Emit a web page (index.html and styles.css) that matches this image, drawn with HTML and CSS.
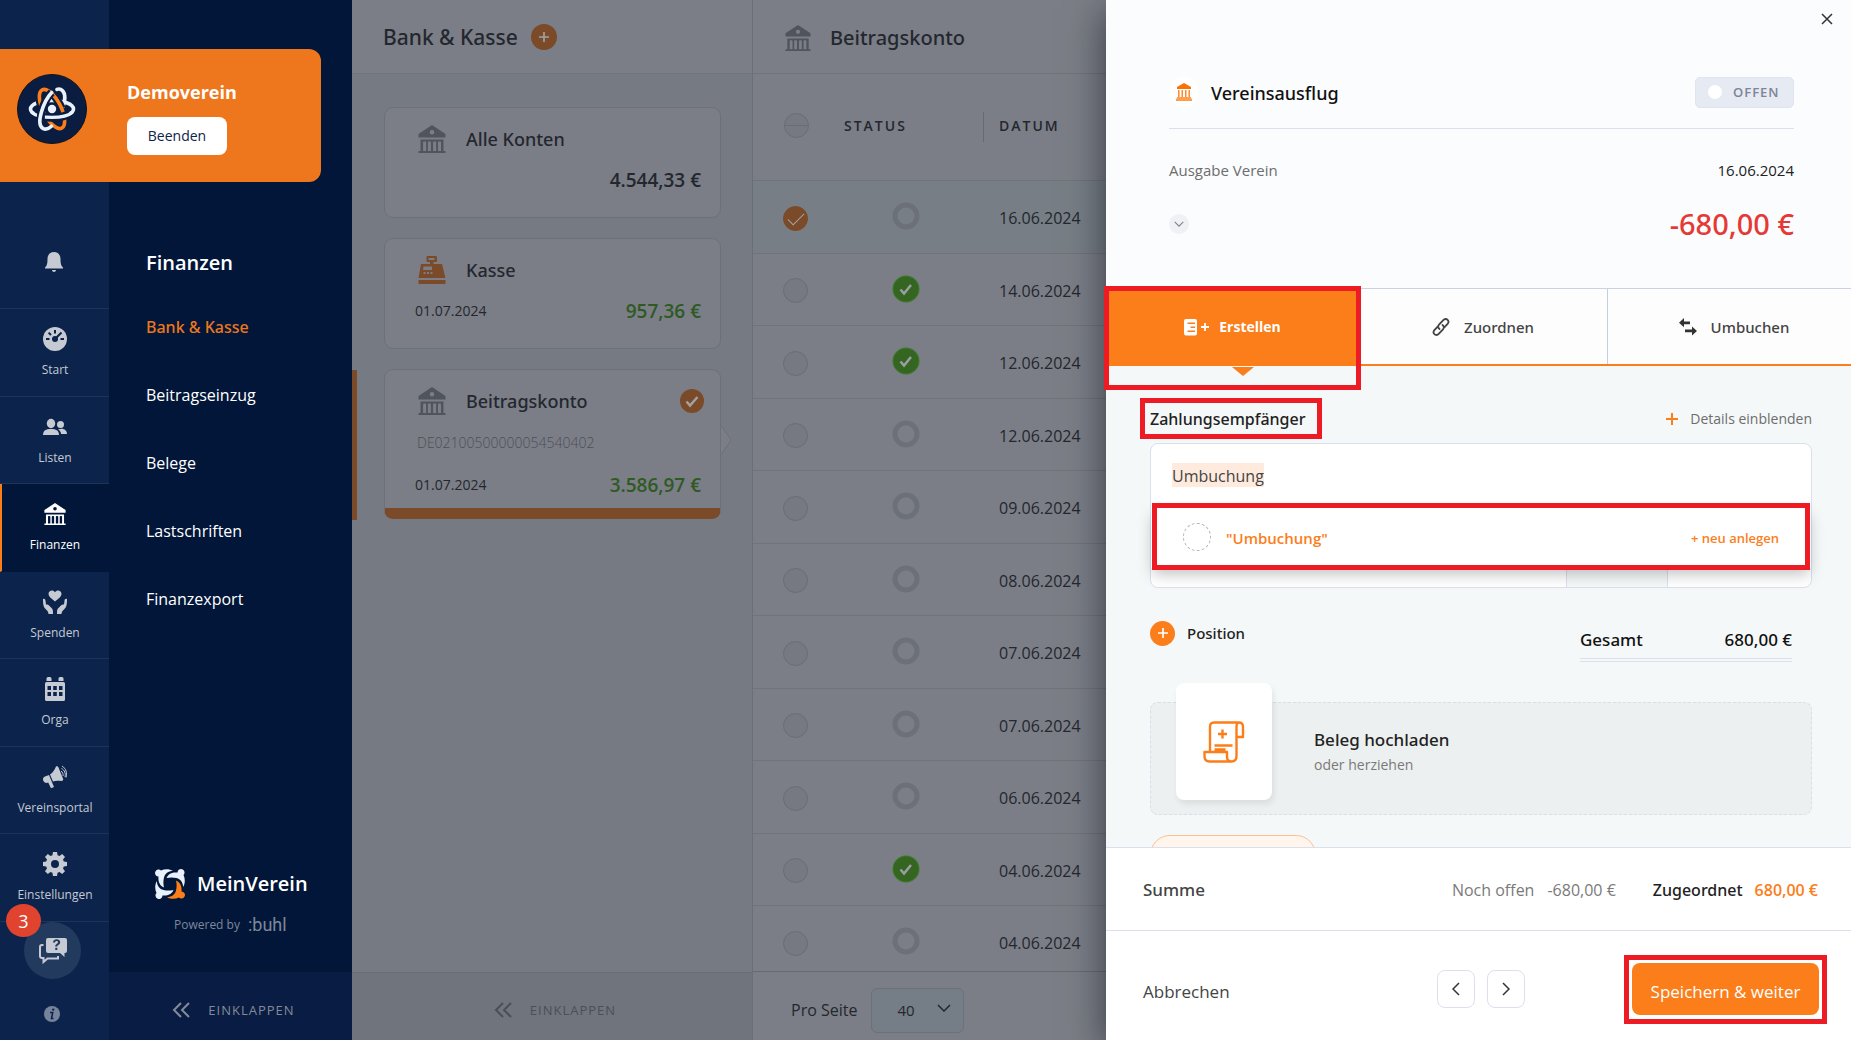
FILE: index.html
```html
<!DOCTYPE html>
<html lang="de">
<head>
<meta charset="utf-8">
<meta name="viewport" content="width=device-width, initial-scale=1">
<title>MeinVerein – Bank &amp; Kasse</title>
<link rel="stylesheet" href="styles.css">
</head>
<body>
<svg class="sprite" aria-hidden="true">
  <symbol id="i-bank" viewBox="0 0 28 28"><path fill-rule="evenodd" d="M14 0 27.500 9v3.500H.5V9zM14 5a2.300 2.300 0 1 0 0 4.600A2.300 2.300 0 0 0 14 5z"/><path fill-rule="evenodd" d="M2.500 14.500h23V26H27.500v2H.5v-2h2zM6 16.500c-.6 0-.9.400-.9 1V26h3v-8.500c0-.6-.4-1-.9-1zm4.800 0c-.6 0-.9.400-.9 1V26h3v-8.500c0-.6-.4-1-.9-1zm5.200 0c-.6 0-.9.400-.9 1V26h3v-8.500c0-.6-.4-1-.9-1zm4.900 0c-.6 0-.9.400-.9 1V26h3v-8.500c0-.6-.4-1-.9-1z"/></symbol>
  <symbol id="i-check" viewBox="0 0 24 24"><path d="m6.500 12.500 3.500 4L17.500 8" fill="none" stroke="currentColor" stroke-width="2.500"/></symbol>
  <symbol id="i-left2" viewBox="0 0 18 16"><path d="M9 1 2 8l7 7M17 1l-7 7 7 7" fill="none" stroke="currentColor" stroke-width="2"/></symbol>
  <symbol id="i-plus" viewBox="0 0 12 12"><path d="M6 0v12M0 6h12" fill="none" stroke="currentColor" stroke-width="2"/></symbol>
  <symbol id="i-down" viewBox="0 0 14 8"><path d="m1 1 6 6 6-6" fill="none" stroke="currentColor" stroke-width="1.500"/></symbol>
  <symbol id="i-ring" viewBox="0 0 28 28"><circle cx="14" cy="14" r="11" fill="none" stroke="#6c7079" stroke-width="5"/></symbol>
  <symbol id="i-done" viewBox="0 0 28 28"><circle cx="14" cy="14" r="13.500" fill="#3e7a2a"/><circle cx="14" cy="14" r="12.500" fill="#356621"/><path d="m8.500 14.500 3.500 4 7-8.500" fill="none" stroke="#9a9da1" stroke-width="2.500"/></symbol>
</svg>

<div class="app">
  <nav class="rail" aria-label="Hauptmenü">
    <a class="bell" href="#" aria-label="Benachrichtigungen"><svg width="18" height="20" viewBox="0 0 18 20"><path d="M9 0c4 0 6.500 3 6.500 7 0 4 .3 6.500 2.500 8.500v1H0v-1C2.200 13.500 2.500 11 2.500 7 2.500 3 5 0 9 0zM7 18h4c0 2.500-4 2.500-4 0z"/></svg></a>
    <ul>
      <li><a href="#"><svg width="24" height="24" viewBox="0 0 24 24"><circle cx="12" cy="12" r="12"/><g stroke="#0c244b" stroke-width="2" fill="none"><path d="M12 3v3.500M3 12h3.500M17.500 12H21M5.600 5.600 8 8M12 12l6.500-6.500"/></g><circle cx="12" cy="12" r="3" fill="#0c244b"/></svg>Start</a></li>
      <li><a href="#"><svg width="24" height="24" viewBox="0 0 24 24"><circle cx="17.500" cy="9.500" r="3.500"/><path d="M15 14.500c5-2 9 .5 9 4.500h-6c0-2-1-3.500-3-4.500z"/><ellipse cx="8" cy="8.500" rx="4.200" ry="4.700"/><path d="M0 20c0-4.500 3-6 8-6s8 1.500 8 6z"/></svg>Listen</a></li>
      <li class="on"><a href="#" aria-current="page"><svg width="22" height="24"><use href="#i-bank"/></svg>Finanzen</a></li>
      <li><a href="#"><svg width="24" height="24" viewBox="0 0 24 24"><path d="M12 11.500C8 8.500 5.500 6.500 5.500 3.800 5.500.5 10-.8 12 2.200c2-3 6.500-1.700 6.500 1.600 0 2.700-2.500 4.700-6.500 7.700z"/><path d="M0 9c1.500-.5 2.500.5 2.500 2l.5 3.500c1 0 1.500-.5 2.800.8L9 18.500c.8 1 1 2 1 5.500H5.500c0-2-1-3-2.500-4.500C.5 17 0 15 0 9zM24 9c-1.500-.5-2.500.5-2.500 2l-.5 3.500c-1 0-1.500-.5-2.800.8L15 18.500c-.8 1-1 2-1 5.500h4.500c0-2 1-3 2.500-4.500C23.500 17 24 15 24 9z"/></svg>Spenden</a></li>
      <li><a href="#"><svg width="24" height="24" viewBox="0 0 24 24"><path fill-rule="evenodd" d="M5 0h2a1.500 1.500 0 0 1 1.500 1.500V4h-5V1.500A1.500 1.500 0 0 1 5 0zm12 0h2a1.500 1.500 0 0 1 1.500 1.500V4h-5V1.500A1.500 1.500 0 0 1 17 0zM3.500 5h17A1.500 1.500 0 0 1 22 6.500v16a1.500 1.500 0 0 1-1.500 1.500h-17A1.500 1.500 0 0 1 2 22.500v-16A1.500 1.500 0 0 1 3.500 5zM4.500 9v4H8V9zm5.700 0v4h3.600V9zm5.800 0v4h3.500V9zM4.500 15v4H8v-4zm5.700 0v4h3.600v-4zm5.800 0v4h3.500v-4z"/></svg>Orga</a></li>
      <li><a href="#"><svg width="24" height="24" viewBox="0 0 24 24"><path d="M13 1.500c1.500-.8 2 0 2.500 1l4.500 11c.5 1.500 0 2.500-1.500 2.500-3.500-.5-6-.5-8.500.5L7 9.500c3-2 4.500-4.500 6-8zM6 10l2.800 6.800L11 22l-3 1.200-2.800-5.700C3 18.500 1 17.500.3 15.800-.5 13.500.5 12 2 11.500z"/><g fill="none" stroke="#c5cad3"><path d="M18 6c1.500 1 2.500 3 2 5M18.500 3.500c3 1.500 4.500 5 3.500 8.500M19 1c4 2.500 5.500 7 4 11.500"/></g></svg>Vereinsportal</a></li>
      <li><a href="#"><svg width="24" height="24" viewBox="0 0 24 24"><path fill-rule="evenodd" d="M10 0h4l.6 3.200 1.900.8L19.200 2.100 22 4.900 20 7.500l.8 1.900L24 10v4l-3.200.6-.8 1.900 2 2.700-2.800 2.800-2.700-2-1.900.8L14 24h-4l-.6-3.200-1.900-.8-2.700 2L2 19.200l2-2.700-.8-1.900L0 14v-4l3.200-.6.8-1.900-2-2.600 2.800-2.800L7.500 4l1.900-.8zM12 8a4 4 0 1 0 0 8 4 4 0 0 0 0-8z"/></svg>Einstellungen</a></li>
    </ul>
    <div class="rail-end">
      <button class="help" type="button" aria-label="Hilfe"><svg width="28" height="26" viewBox="0 0 28 26"><path fill-rule="evenodd" d="M9 0h17a2 2 0 0 1 2 2v11a2 2 0 0 1-2 2h-.5v4L21 15H9a2 2 0 0 1-2-2V2a2 2 0 0 1 2-2zm5 4.500h2c0-2 3-2 3-.2 0 1.500-2.800 1.700-2.800 4.200h2c0-1.500 3-1.800 3-4.300 0-4-7-4-7.200.3zm2.300 5.300v2.200h2V9.800z"/><path d="M4.500 7H3a2 2 0 0 0-2 2v9a2 2 0 0 0 2 2h1.500v4l4-3.500H19V18" fill="none" stroke="#c5cad3" stroke-width="2"/></svg><span class="count">3</span></button>
      <a class="info" href="#" aria-label="Info"><svg width="16" height="16" viewBox="0 0 16 16"><circle cx="8" cy="8" r="8" fill="#76839b"/><circle cx="9.200" cy="3.600" r="1.200" fill="#0c244b"/><path d="M6 6.500h2.700L7.500 12.500h2" fill="none" stroke="#0c244b" stroke-width="1.600"/></svg></a>
    </div>
  </nav>

  <nav class="subnav" aria-label="Finanzen">
    <h2>Finanzen</h2>
    <ul>
      <li><a class="on" href="#">Bank &amp; Kasse</a></li>
      <li><a href="#">Beitragseinzug</a></li>
      <li><a href="#">Belege</a></li>
      <li><a href="#">Lastschriften</a></li>
      <li><a href="#">Finanzexport</a></li>
    </ul>
    <div class="brand">
      <div class="brand-name"><svg width="30" height="30" viewBox="0 0 30 30"><defs><path id="fig" d="M21 11.500c4.500 2 6 6 5.500 11a3.500 3.500 0 1 1-2.500 6c-4 1.900-8.500 1.600-12-.3 5-.4 8-2.700 9-6.700.8-3.500.8-6.500 0-10z"/></defs><g fill="#e8f1fc"><use href="#fig" transform="rotate(90 15 15)"/><use href="#fig" transform="rotate(180 15 15)"/><use href="#fig" transform="rotate(-90 15 15)"/></g><use href="#fig" fill="#fb7e1a"/></svg>MeinVerein</div>
      <div class="powered">Powered by <span>:buhl</span></div>
    </div>
    <button class="collapse" type="button"><svg width="18" height="16"><use href="#i-left2"/></svg>Einklappen</button>
  </nav>

  <section class="club" aria-label="Verein">
    <svg width="70" height="70" viewBox="0 0 70 70"><circle cx="35" cy="35" r="34.500" fill="#0a1c40" stroke="#10131c"/><g fill="none" stroke-width="3.600" stroke-linecap="round"><g transform="rotate(24 35 35)"><path d="M44 28c-.5-9-4.500-14.500-9-14.500-1.500 0-2.500.5-3.500 1.500" stroke="#e8f1fc"/></g><ellipse cx="35" cy="35" rx="21.500" ry="8.500" stroke="#e8f1fc"/><g transform="rotate(-27 35 35)"><path d="M26 36c0-13 4-22.500 9-22.500s9 9.500 9 21.500v4" stroke="#0a1c40" stroke-width="8" stroke-linecap="butt"/><ellipse cx="35" cy="35" rx="9" ry="21.500" stroke="#fb7e1a"/></g><path d="M17 39.500c9 5.500 27 5.500 36 0" stroke="#0a1c40" stroke-width="8" stroke-linecap="butt"/><path d="M15 38.500c7 6.500 33 6.500 40 0" stroke="#e8f1fc" stroke-width="3.400"/><g transform="rotate(24 35 35)"><path d="M28 20c-3.500 9-2.500 22 1 29" stroke="#0a1c40" stroke-width="8" stroke-linecap="butt"/><path d="M28 20c-4 11-2 36.500 7 36.500 3 0 5-2 6.500-5.500" stroke="#e8f1fc"/></g></g><circle cx="35" cy="35" r="4.200" fill="#e8f1fc"/></svg>
    <div><strong>Demoverein</strong><button type="button">Beenden</button></div>
  </section>

  <section class="accounts">
    <header><h1>Bank &amp; Kasse</h1><button class="add" type="button" aria-label="Konto hinzufügen"><svg width="10" height="10"><use href="#i-plus"/></svg></button></header>
    <div class="cards">
      <article class="card">
        <div class="card-head"><svg class="gray" width="28" height="28"><use href="#i-bank"/></svg><h3>Alle Konten</h3></div>
        <div class="card-foot"><span></span><b class="dark">4.544,33 €</b></div>
      </article>
      <article class="card">
        <div class="card-head"><svg class="orange" width="28" height="28" viewBox="0 0 28 28"><path fill-rule="evenodd" d="M9 0h9a1 1 0 0 1 1 1v4a1 1 0 0 1-1 1h-2.500v2H24l3.500 14H.5L3 8h9V6H9.500a1 1 0 0 1-1-1V1zm1.500 2v2h6V2zM5.500 10.500 5 14h9v-3.500zM5.500 16v2h2v-2zm3.500 0v2h2v-2zm3.500 0v2h2v-2z"/><path d="M.5 24h27v3a1.500 1.500 0 0 1-1.500 1.500H2A1.500 1.500 0 0 1 .5 27z"/></svg><h3>Kasse</h3></div>
        <div class="card-foot"><time>01.07.2024</time><b>957,36 €</b></div>
      </article>
      <article class="card on">
        <div class="card-head"><svg class="gray" width="28" height="28"><use href="#i-bank"/></svg><h3>Beitragskonto</h3><span class="tick"><svg width="24" height="24"><use href="#i-check"/></svg></span></div>
        <div class="iban">DE02100500000054540402</div>
        <div class="card-foot"><time>01.07.2024</time><b>3.586,97 €</b></div>
        <svg class="pointer" width="12" height="32" viewBox="0 0 12 32"><path d="M1 1l10 15L1 31" fill="#7b7e86" stroke="#6c7079"/></svg>
      </article>
    </div>
    <button class="collapse" type="button"><svg width="18" height="16"><use href="#i-left2"/></svg>Einklappen</button>
  </section>

  <main class="bookings">
    <header><svg class="gray" width="26" height="28"><use href="#i-bank"/></svg><h2>Beitragskonto</h2></header>
    <div class="scroll">
      <table>
        <thead><tr><th class="c-sel"><input class="all" type="checkbox" aria-label="Alle auswählen"></th><th class="c-stat">Status</th><th class="c-date">Datum</th></tr></thead>
        <tbody>
          <tr class="on"><td><input type="checkbox" checked aria-label="Buchung 16.06.2024"></td><td class="stat"><svg width="28" height="28"><use href="#i-ring"/></svg></td><td>16.06.2024</td></tr>
          <tr><td><input type="checkbox" aria-label="Buchung 14.06.2024"></td><td class="stat"><svg width="28" height="28"><use href="#i-done"/></svg></td><td>14.06.2024</td></tr>
          <tr><td><input type="checkbox" aria-label="Buchung 12.06.2024"></td><td class="stat"><svg width="28" height="28"><use href="#i-done"/></svg></td><td>12.06.2024</td></tr>
          <tr><td><input type="checkbox" aria-label="Buchung 12.06.2024"></td><td class="stat"><svg width="28" height="28"><use href="#i-ring"/></svg></td><td>12.06.2024</td></tr>
          <tr><td><input type="checkbox" aria-label="Buchung 09.06.2024"></td><td class="stat"><svg width="28" height="28"><use href="#i-ring"/></svg></td><td>09.06.2024</td></tr>
          <tr><td><input type="checkbox" aria-label="Buchung 08.06.2024"></td><td class="stat"><svg width="28" height="28"><use href="#i-ring"/></svg></td><td>08.06.2024</td></tr>
          <tr><td><input type="checkbox" aria-label="Buchung 07.06.2024"></td><td class="stat"><svg width="28" height="28"><use href="#i-ring"/></svg></td><td>07.06.2024</td></tr>
          <tr><td><input type="checkbox" aria-label="Buchung 07.06.2024"></td><td class="stat"><svg width="28" height="28"><use href="#i-ring"/></svg></td><td>07.06.2024</td></tr>
          <tr><td><input type="checkbox" aria-label="Buchung 06.06.2024"></td><td class="stat"><svg width="28" height="28"><use href="#i-ring"/></svg></td><td>06.06.2024</td></tr>
          <tr><td><input type="checkbox" aria-label="Buchung 04.06.2024"></td><td class="stat"><svg width="28" height="28"><use href="#i-done"/></svg></td><td>04.06.2024</td></tr>
          <tr><td><input type="checkbox" aria-label="Buchung 04.06.2024"></td><td class="stat"><svg width="28" height="28"><use href="#i-ring"/></svg></td><td>04.06.2024</td></tr>
        </tbody>
      </table>
    </div>
    <footer><label for="per-page">Pro Seite</label><span class="select"><select id="per-page"><option>40</option></select><svg width="14" height="8"><use href="#i-down"/></svg></span></footer>
  </main>

  <aside class="panel" aria-label="Buchung zuordnen">
    <button class="close" type="button" aria-label="Schließen"><svg width="12" height="12" viewBox="0 0 12 12"><path d="m1 1 10 10M11 1 1 11" stroke="#333" stroke-width="1.500"/></svg></button>
    <header class="detail">
      <div class="title">
        <span class="title-icon"><svg width="18" height="18" viewBox="0 0 18 18"><path d="M9 0l7 4v2H2V4z" fill="#fb7200"/><path d="M3 7h1.500v7H3zm3.500 0H8v7H6.500zM10 7h1.500v7H10zm3.500 0H15v7h-1.500z" fill="#fb8a30"/><path d="M2 14h14v1.500h1V18H1v-2.500h1z" fill="#fca050"/></svg></span>
        <h2>Vereinsausflug</h2><span class="badge">Offen</span>
      </div>
      <div class="line"><span>Ausgabe Verein</span><time>16.06.2024</time></div>
      <div class="line amount"><button type="button" aria-label="Mehr anzeigen"><svg width="10" height="6"><use href="#i-down"/></svg></button><b>-680,00 €</b></div>
    </header>
    <div class="tabs" role="tablist">
      <button class="on" type="button" role="tab" aria-selected="true"><svg width="26" height="18" viewBox="0 0 26 18"><path fill-rule="evenodd" d="M2 1h9a2 2 0 0 1 2 2v12.500a2 2 0 0 1-2 2H2a2 2 0 0 1-2-2V3a2 2 0 0 1 2-2zm1.500 3.500V6H11V4.500zm3 4V10H11V8.500zm-3 4V14H11v-1.500z"/><path d="M17 9h8M21 5v8" stroke="#fff" stroke-width="1.800"/></svg>Erstellen</button>
      <button type="button" role="tab"><svg width="18" height="18" viewBox="0 0 18 18"><g fill="none" stroke="#444" stroke-width="1.800" stroke-linecap="round"><path d="M7.500 11C5.800 9.700 5.800 8 7 6.700l4.300-4.600c1.300-1.400 3.200-1.400 4.300-.3s1.100 2.800 0 4.100l-3 3.300"/><path d="M10.500 7c1.700 1.300 1.700 3 .5 4.300l-4.300 4.600c-1.300 1.400-3.200 1.400-4.300.3s-1.100-2.800 0-4.100l3-3.300"/></g></svg>Zuordnen</button>
      <button type="button" role="tab"><svg width="18" height="18" viewBox="0 0 18 18"><path d="M5 0v3.500h6v2.800H5v3L0 4.700zM13 8.500 18 13l-5 4.500v-3.200H6v-2.800h7z" fill="#333"/></svg>Umbuchen</button>
      <span class="mark mark-tab"></span>
    </div>
    <div class="form">
      <div class="form-head"><label for="payee">Zahlungsempfänger<span class="mark mark-label"></span></label><button class="more" type="button"><svg width="12" height="12"><use href="#i-plus"/></svg>Details einblenden</button></div>
      <div class="entry">
        <div class="payee"><input id="payee" type="text" value="Umbuchung"></div>
        <div class="cells"><span></span><span></span><span></span></div>
        <button class="suggest" type="button"><span class="dash"></span><b>"Umbuchung"</b><em>+ neu anlegen</em><span class="mark mark-suggest"></span></button>
      </div>
      <div class="totals">
        <button class="position" type="button"><span><svg width="10" height="10"><use href="#i-plus"/></svg></span>Position</button>
        <div class="sum"><span>Gesamt</span><span>680,00 €</span></div>
      </div>
      <div class="upload">
        <div class="receipt"><svg width="42" height="42" viewBox="0 0 42 42"><g fill="none" stroke="#fb7e1a" stroke-width="2.400" stroke-linejoin="round"><path d="M7 31V6c0-3 1-4.500 4-4.500h25M36 1.500c3 0 4 2 4 4.500v10h-6.500V6c0-2.500.5-4.500 2.500-4.500zM33.500 16v19c0 3.500-2 5.500-5 5.500s-4.500-2-4.500-4.500v-5H1.500v4c0 3.500 1.500 5.500 5 5.500h22M15 13h9M19.500 8.500v9M11.500 24.500h18M11.500 28.500h11"/></g></svg></div>
        <div class="upload-text"><strong>Beleg hochladen</strong><p>oder herziehen</p></div>
      </div>
      <button class="pill" type="button" aria-label="Weitere Angaben"></button>
    </div>
    <div class="balance"><strong>Summe</strong><span class="open">Noch offen</span><span class="open">-680,00 €</span><span class="assigned">Zugeordnet</span><b>680,00 €</b></div>
    <footer>
      <button class="cancel" type="button">Abbrechen</button>
      <button class="step" type="button" aria-label="Zurück"><svg width="8" height="14" viewBox="0 0 8 14"><path d="M7 1 1 7l6 6" fill="none" stroke="#333" stroke-width="1.500"/></svg></button>
      <button class="step" type="button" aria-label="Vor"><svg width="8" height="14" viewBox="0 0 8 14"><path d="m1 1 6 6-6 6" fill="none" stroke="#333" stroke-width="1.500"/></svg></button>
      <button class="save" type="button">Speichern &amp; weiter<span class="mark mark-save"></span></button>
    </footer>
  </aside>
</div>
</body>
</html>
```
FILE: styles.css
```css
* { box-sizing: border-box; }
body { margin: 0; font: 15px/20px "Open Sans", "Noto Sans", sans-serif; color: #222; background: #7b7e86; }
button, input, select { font: inherit; color: inherit; border: 0; background: none; padding: 0; }
h1, h2, h3, p, ul { margin: 0; padding: 0; font-weight: 400; }
ul { list-style: none; }
a { color: inherit; text-decoration: none; }
svg { display: block; flex: none; fill: currentColor; }
.sprite { position: absolute; width: 0; height: 0; }

/* medium weight for headings and emphasised values */
h1, h3, .bookings h2, .title h2, .amount b, .form-head label, .position, .sum, .upload strong,
.balance strong, .assigned, .tabs button, .subnav .on { font-family: "Noto Sans", "Open Sans", sans-serif; font-weight: 500; }

.app { position: relative; display: grid; grid-template-columns: 109px 243px 401px 1fr; height: 100vh; overflow: hidden; }
.app > * { min-height: 0; }
.gray { color: #50545d; }
.orange { color: #7a4a29; }

/* icon rail */
.rail { display: flex; flex-direction: column; background: #0c244b; color: #c5cad3; }
.bell { flex: none; height: 309px; padding: 252px 0 0 45px; border-bottom: 1px solid #1f3558; }
.rail ul { flex: 1; display: flex; flex-direction: column; }
.rail li { flex: 1; display: flex; border-bottom: 1px solid #1f3558; }
.rail li a { flex: 1; display: flex; flex-direction: column; align-items: center; gap: 9px; padding: 18px 0 0 1px; font-size: 12px; line-height: 20px; }
.rail li.on { background: #011638; color: #fff; border-left: 2px solid #fb7e1a; border-bottom-color: #011638; }
.rail li.on a { padding: 18px 1px 0 0; }
.rail-end { flex: none; height: 118px; padding-left: 24px; }
.help { position: relative; display: flex; align-items: center; justify-content: center; width: 57px; height: 57px; border-radius: 50%; background: #233a5f; }
.count { position: absolute; left: -18px; top: -18px; width: 35px; height: 33px; border-radius: 50%; background: #e0432e; color: #fff; font-size: 18px; line-height: 34px; }
.info { display: block; margin: 27px 0 0 20px; }

/* sub navigation */
.subnav { display: flex; flex-direction: column; background: #011638; color: #fff; }
.subnav h2 { margin: 249px 0 0 37px; font-size: 20px; line-height: 28px; font-weight: 600; }
.subnav ul { flex: 1; padding: 16px 0 0 37px; font-size: 16px; }
.subnav li { height: 68px; line-height: 68px; }
.subnav .on { color: #ee761c; }
.brand { height: 104px; padding-left: 46px; }
.brand-name { display: flex; align-items: center; gap: 12px; font: 600 20px/32px "Open Sans", sans-serif; color: #fff; }
.powered { display: flex; align-items: center; gap: 8px; padding: 15px 0 0 19px; font-size: 12px; color: #7d889b; }
.powered span { font: 18px/20px Roboto, sans-serif; }
.collapse { flex: none; display: flex; align-items: center; justify-content: center; gap: 18px; height: 68px; padding: 7px 0 0 6px; text-transform: uppercase; font-size: 13px; letter-spacing: 1px; }
.subnav .collapse { background: #091c43; color: #848b98; }

/* club card over both navigations */
.club { position: absolute; left: 0; top: 49px; width: 321px; height: 133px; display: flex; gap: 40px; padding: 25px 0 0 17px; background: #ee761c; border-radius: 0 12px 12px 0; color: #fff; }
.club div { display: flex; flex-direction: column; align-items: flex-start; gap: 11px; padding-top: 4px; }
.club strong { font-size: 18px; line-height: 28px; font-weight: 700; }
.club button { width: 100px; height: 38px; border-radius: 8px; background: #fff; color: #0c244b; font-size: 14px; }

/* account list */
.accounts { display: flex; flex-direction: column; background: #767a83; color: #23272f; border-right: 1px solid #6a6e77; }
.accounts header { display: flex; align-items: center; gap: 13px; height: 74px; padding-left: 31px; background: #7b7e86; border-bottom: 1px solid #70747d; }
.accounts h1 { font-size: 21px; line-height: 30px; }
.add { display: flex; align-items: center; justify-content: center; width: 26px; height: 26px; border-radius: 50%; background: #7a4a29; color: #a0a2a6; }
.cards { flex: 1; display: flex; flex-direction: column; gap: 20px; padding: 33px 31px 0 32px; }
.card { position: relative; height: 111px; padding: 15px 19px 0 30px; background: #7b7e86; border: 1px solid #6c7079; border-radius: 9px; }
.card-head { display: flex; align-items: center; gap: 20px; height: 32px; padding-left: 3px; }
.card h3 { flex: 1; font-size: 18px; line-height: 24px; }
.card-foot { display: flex; align-items: center; justify-content: space-between; height: 50px; font-size: 14px; }
.card-foot b { font-size: 19px; font-weight: 600; color: #2f5a24; }
.card-foot .dark { color: #23272f; }
.card.on { height: 150px; border-bottom: 11px solid #7a4a29; }
.card.on::before { content: ""; position: absolute; left: -33px; top: 0; width: 5px; height: 150px; background: #7a4a29; }
.tick { margin-right: -3px; width: 24px; height: 24px; border-radius: 50%; background: #7a4a29; color: #a0a2a6; }
.iban { padding: 16px 0 7px 2px; font-size: 14px; line-height: 20px; font-weight: 300; color: #4b4f58; }
.pointer { position: absolute; right: -12px; top: 54px; }
.accounts .collapse { background: #70747d; color: #4b4f58; border-top: 1px solid #6a6e77; }

/* booking list */
.bookings { display: flex; flex-direction: column; background: #7b7e86; color: #23272f; }
.bookings header { flex: none; display: flex; align-items: center; gap: 19px; height: 74px; padding: 2px 0 0 32px; border-bottom: 1px solid #6f737c; }
.bookings h2 { font-size: 20px; line-height: 30px; }
.scroll { flex: 1; min-height: 0; overflow: hidden; }
table { width: 100%; border-collapse: separate; border-spacing: 0; table-layout: fixed; }
th, td { padding: 0; text-align: left; border-bottom: 1px solid #6f737c; }
thead th { height: 107px; padding-bottom: 3px; font-size: 14px; font-weight: 600; text-transform: uppercase; letter-spacing: 2px; }
.c-sel { width: 91px; }
.c-stat { width: 155px; background: linear-gradient(#666a73, #666a73) right 15px center / 1px 30px no-repeat; }
tbody td { height: 73px; padding-top: 2px; font-size: 16px; }
tbody tr:nth-child(even) td { height: 72px; }
tbody .on td { background: #777e85; }
.stat svg { margin: -4px 0 0 48px; }
td input, th input { appearance: none; display: block; width: 25px; height: 25px; margin: 0 0 0 30px; border: 1px solid #696d76; border-radius: 50%; background: #767981; }
.all { margin: 0 0 0 31px; background: linear-gradient(#696d76, #696d76) center / 100% 1px no-repeat #767981; }
td input:checked { border-color: #7a4a29; background: #7a4a29; }
td input:checked::after { content: ""; display: block; width: 15px; height: 7px; margin: 6px 0 0 4px; border: solid #a0a2a6; border-width: 0 0 1px 1px; transform: rotate(-45deg); }
.bookings footer { flex: none; display: flex; align-items: center; gap: 14px; height: 69px; padding: 8px 0 0 38px; font-size: 16px; border-top: 1px solid #666a73; }
.select { display: grid; align-items: center; width: 93px; height: 45px; }
.select select { grid-area: 1/1; width: 100%; height: 100%; padding-left: 25px; appearance: none; font-size: 15px; background: #757d86; border: 1px solid #6d717a; border-radius: 6px; }
.select svg { grid-area: 1/1; justify-self: end; margin: 0 13px 4px 0; }

/* slide-over panel */
.panel { position: absolute; right: 0; top: 0; bottom: 0; width: 745px; display: flex; flex-direction: column; background: #fff; box-shadow: 0 10px 36px rgba(10, 14, 24, .6); clip-path: inset(0 0 0 -60px); }
.mark { position: absolute; border: 5px solid #ed1c24; pointer-events: none; }
.close { position: absolute; right: 18px; top: 13px; }
.detail { flex: none; height: 288px; padding: 77px 57px 0 63px; background: #fbfcfe; }
.title { display: flex; align-items: center; height: 52px; padding-bottom: 21px; border-bottom: 1px solid #dcdfee; }
.title-icon { display: flex; align-items: center; justify-content: center; width: 30px; height: 30px; border-radius: 50%; background: #fff; }
.title h2 { flex: 1; padding: 2px 0 0 12px; font-size: 18px; line-height: 28px; color: #111; }
.badge { display: flex; align-items: center; gap: 11px; width: 99px; height: 31px; padding-left: 12px; border: 1px solid #dfe4f0; border-radius: 5px; background: #e6eaf3; color: #7c8497; font-size: 13px; font-weight: 600; letter-spacing: 1px; text-transform: uppercase; }
.badge::before { content: ""; width: 14px; height: 14px; border-radius: 50%; background: #fff; }
.line { display: flex; align-items: center; justify-content: space-between; padding-top: 31px; font-size: 15px; color: #6d6d6d; }
.line time { color: #222; }
.amount { padding-top: 26px; }
.amount button { display: flex; align-items: center; justify-content: center; width: 20px; height: 20px; border-radius: 50%; background: #f0f0f5; color: #7c8090; }
.amount b { font-size: 29px; line-height: 36px; color: #e53935; }
.tabs { flex: none; position: relative; display: grid; grid-template-columns: repeat(3, 1fr); width: calc(100% + 8px); height: 78px; border-top: 1px solid #ccd3e0; border-bottom: 2px solid #fb7e1a; background: #fdfdfd; }
.tabs button { display: flex; align-items: center; justify-content: center; gap: 14px; padding: 1px 0 0 2px; font-size: 15px; color: #444; }
.tabs button + button { border-right: 1px solid #c5cfdd; }
.tabs .on { position: relative; gap: 9px; background: #fb7e1a; color: #fff; font-family: "Open Sans", sans-serif; font-size: 14px; font-weight: 700; }
.tabs .on::after { content: ""; position: absolute; left: 50%; top: 78px; border: solid transparent; border-width: 9px 11px 0; border-top-color: #fb7e1a; }
.mark-tab { left: -2px; top: -3px; width: 257px; height: 104px; }
.form { flex: 1; min-height: 0; overflow: hidden; padding: 39px 39px 0 44px; background: #f4f8f9; }
.form-head { display: flex; align-items: center; justify-content: space-between; height: 28px; }
.form-head label { position: relative; font-size: 16px; line-height: 28px; }
.mark-label { inset: -7px -17px -6px -10px; }
.more { display: flex; align-items: center; gap: 12px; color: #6d6d6d; font-size: 14px; }
.more svg { color: #fb7e1a; }
.entry { position: relative; height: 145px; margin-top: 10px; background: #fff; border: 1px solid #dcdfee; border-radius: 8px; }
.payee { display: flex; padding: 19px 21px 0; }
.payee input { field-sizing: content; height: 24px; padding-top: 1px; font-size: 16px; color: #444; background: #ffebde; outline: 0; }
.cells { position: absolute; inset: auto 0 0; display: grid; grid-template-columns: 1fr 102px 143px; height: 40px; }
.cells span:nth-child(2) { background: #f4f8f9; border: solid #dcdfee; border-width: 0 1px; }
.suggest { position: absolute; left: 0; right: 0; top: 62px; height: 62px; display: flex; align-items: center; padding: 0 32px; background: #fff; color: #fb7e1a; box-shadow: 0 8px 14px -2px rgba(0, 0, 0, .25); }
.dash { width: 28px; height: 28px; border: 1px dashed #b5b5b5; border-radius: 50%; }
.suggest b { flex: 1; padding: 2px 0 0 15px; text-align: left; font-size: 15px; font-weight: 600; }
.suggest em { padding-top: 2px; font-style: normal; font-size: 13px; font-weight: 600; }
.mark-suggest { inset: -3px 1px -2px; }
.totals { display: flex; justify-content: space-between; align-items: flex-start; height: 114px; padding: 32px 20px 0 0; }
.position { display: flex; align-items: center; gap: 12px; font-size: 15px; line-height: 26px; }
.position span { display: flex; align-items: center; justify-content: center; width: 25px; height: 25px; border-radius: 50%; background: #fb7e1a; color: #fff; }
.sum { display: flex; justify-content: space-between; width: 212px; height: 42px; padding-top: 6px; border-bottom: 4px double #dcdfee; font-size: 17px; line-height: 28px; color: #111; }
.upload { display: flex; align-items: center; gap: 42px; height: 113px; padding-left: 25px; background: #edf0f0; border: 1px dashed #d9dfe8; border-radius: 8px; }
.receipt { display: flex; align-items: center; justify-content: center; width: 96px; height: 117px; margin-bottom: 34px; flex: none; background: #fff; border-radius: 8px; box-shadow: 2px 4px 6px rgba(0, 0, 0, .08); }
.upload-text { padding-bottom: 16px; }
.upload strong { font-size: 17px; line-height: 28px; }
.upload p { font-size: 14px; line-height: 22px; color: #7a7a7a; }
.pill { display: block; width: 166px; height: 40px; margin-top: 20px; border: 1px solid #fcc18c; border-radius: 20px; background: #fff5ed; }
.balance { flex: none; display: flex; align-items: center; height: 84px; padding: 2px 33px 0 37px; border-top: 1px solid #dbe1ea; border-bottom: 1px solid #dbe1ea; background: #fff; font-size: 16px; }
.balance strong { flex: 1; font-size: 17px; color: #444; }
.open { margin-right: 13px; color: #7a7a7a; }
.assigned { margin: 0 12px 0 24px; }
.balance b { font-weight: 600; color: #fb7e1a; }
.panel footer { flex: none; display: flex; align-items: center; height: 109px; padding: 6px 32px 0 37px; background: #fff; }
.cancel { margin-right: auto; font-size: 17px; color: #444; padding-top: 6px; }
.step { display: flex; align-items: center; justify-content: center; width: 38px; height: 38px; margin-right: 12px; border: 1px solid #dcdfee; border-radius: 8px; background: #fff; }
.save { position: relative; width: 187px; height: 52px; margin-left: 95px; padding-top: 6px; border-radius: 8px; background: #fb7e1a; color: #fff; font-size: 17px; }
.mark-save { inset: -8px -8px -9px; }
```
